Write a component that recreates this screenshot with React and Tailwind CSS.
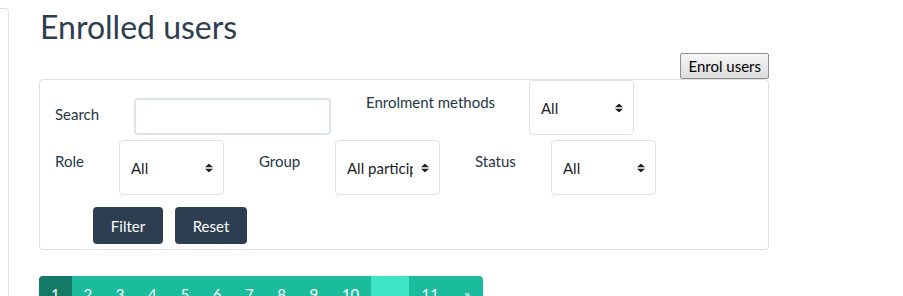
import React from 'react';

function SelectBox({ value }) {
  return (
    <div className="relative flex h-[55px] w-[105px] shrink-0 items-center rounded-[4px] border border-[#dee2e6] bg-white pl-[11px] pr-[26px]">
      <span className="overflow-hidden whitespace-nowrap text-[15px] text-[#1d2125]">{value}</span>
      <svg className="absolute right-[10px] top-1/2 -translate-y-1/2" width="8" height="9" viewBox="0 0 8 9">
        <path d="M0 3.8 L4 0 L8 3.8 Z" fill="#222" />
        <path d="M0 5.2 L4 9 L8 5.2 Z" fill="#222" />
      </svg>
    </div>
  );
}

const pages = ['2', '3', '4', '5', '6', '7', '8', '9', '10'];

export default function App() {
  return (
    <div className="flex min-h-[296px] bg-white font-['Lato','Liberation_Sans',sans-serif] text-[15px] leading-[1.5] text-[#263544]">
      <div className="mt-2 h-[400px] w-[9px] shrink-0 rounded-tr-[4px] border-r border-t border-[#dee2e6]"></div>

      <div className="ml-[30px] flex w-[730px] shrink-0 flex-col">
        <h2 className="pl-px pt-[8px] text-[32px] font-normal leading-[1.2] text-[#2c3e50]">Enrolled users</h2>

        <div className="mt-[7px] flex justify-end">
          <button className="h-[26px] rounded-[2px] border border-[#8f8f8f] bg-gradient-to-b from-[#f7f7f7] to-[#dcdcdc] px-[7px] text-[15px] leading-none text-black">
            Enrol users
          </button>
        </div>

        <div className="rounded-[4px] border border-[#dee2e6] pl-[15px] pb-[5px]">
          <div className="flex h-[55px] items-start">
            <label className="mt-[23px] w-[79px] shrink-0">Search</label>
            <input className="mt-[18px] h-[37px] w-[197px] shrink-0 rounded-[4px] border-2 border-[#dbe3ec] bg-white outline-none" />
            <label className="ml-[35px] mt-[11px] w-[163px] shrink-0">Enrolment methods</label>
            <SelectBox value="All" />
          </div>

          <div className="mt-[5px] flex h-[55px] items-start">
            <label className="mt-[10px] w-[64px] shrink-0">Role</label>
            <SelectBox value="All" />
            <label className="ml-[35px] mt-[10px] w-[76px] shrink-0">Group</label>
            <SelectBox value="All participants" />
            <label className="ml-[35px] mt-[10px] w-[76px] shrink-0">Status</label>
            <SelectBox value="All" />
          </div>

          <div className="ml-[38px] mt-[12px] flex gap-[12px]">
            <button className="h-[37px] w-[70px] rounded-[4px] bg-[#2c3e50] text-[15px] text-white">Filter</button>
            <button className="h-[37px] w-[72px] rounded-[4px] bg-[#2c3e50] text-[15px] text-white">Reset</button>
          </div>
        </div>

        <div className="mt-[26px] flex self-start overflow-hidden rounded-t-[4px] text-[15px] text-white">
          <span className="bg-[#127a66] px-[12px] py-[7px]">1</span>
          {pages.map((p) => (
            <span key={p} className="bg-[#1abc9c] px-[11.8px] py-[7px]">{p}</span>
          ))}
          <span className="w-[38px] bg-[#3de5c4] py-[7px]"></span>
          <span className="bg-[#1abc9c] px-[12.5px] py-[7px]">11</span>
          <span className="bg-[#1abc9c] px-[12.5px] py-[7px]">»</span>
        </div>
      </div>
    </div>
  );
}
